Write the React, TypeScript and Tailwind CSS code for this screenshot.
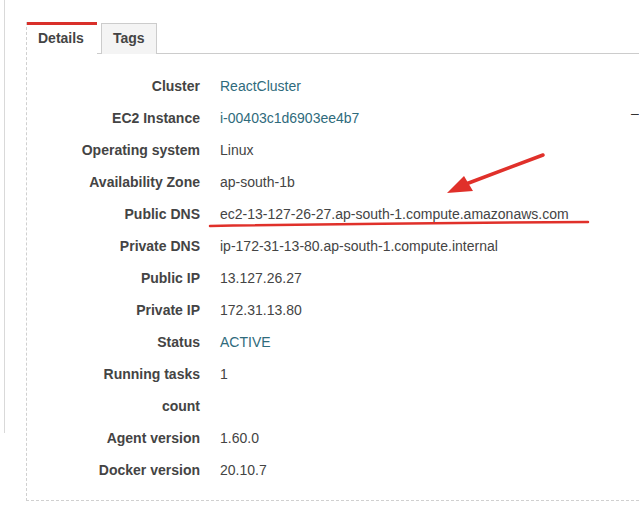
import React from 'react';

type Row = { label: string; value?: string; link?: boolean };

const rows: Row[] = [
  { label: 'Cluster', value: 'ReactCluster', link: true },
  { label: 'EC2 Instance', value: 'i-00403c1d6903ee4b7', link: true },
  { label: 'Operating system', value: 'Linux' },
  { label: 'Availability Zone', value: 'ap-south-1b' },
  { label: 'Public DNS', value: 'ec2-13-127-26-27.ap-south-1.compute.amazonaws.com' },
  { label: 'Private DNS', value: 'ip-172-31-13-80.ap-south-1.compute.internal' },
  { label: 'Public IP', value: '13.127.26.27' },
  { label: 'Private IP', value: '172.31.13.80' },
  { label: 'Status', value: 'ACTIVE', link: true },
  { label: 'Running tasks', value: '1' },
  { label: 'count' },
  { label: 'Agent version', value: '1.60.0' },
  { label: 'Docker version', value: '20.10.7' },
];

export default function App() {
  return (
    <div className="relative w-[639px] h-[515px] overflow-hidden bg-white font-['Liberation_Sans',Arial,sans-serif] text-[14px] text-[#444]">
      <div className="flex">
        {/* outer page rule */}
        <div className="w-[4px] shrink-0" />
        <div className="w-px h-[433px] bg-[#d9d9d9] shrink-0" />
        <div className="w-[21px] shrink-0" />

        {/* details panel */}
        <div className="flex-1 pt-[22px]">
          <div className="border-l border-b border-dashed border-[#d0d0d0] h-[479px]">
            {/* Tabs */}
            <div className="flex h-[32px]">
              <div className="w-[70px] border-t-[3px] border-[#d9302a] pl-[11px] pt-[3px] font-bold">Details</div>
              <div className="w-[4px] border-b border-[#cccccc]" />
              <div className="w-[56px] mt-px border border-b-0 border-[#cccccc] bg-[#f4f4f4] pl-[11px] pt-[4px] font-bold">Tags</div>
              <div className="flex-1 border-b border-[#cccccc]" />
            </div>

            {/* Rows */}
            <div className="pt-[16px]">
              {rows.map((r) => (
                <div key={r.label} className="flex h-[32px] items-center">
                  <div className="w-[173px] text-right font-bold">{r.label}</div>
                  <div className={`pl-[20px] whitespace-nowrap ${r.link ? 'text-[#2f6b7c]' : 'text-[#444]'}`}>{r.value}</div>
                </div>
              ))}
            </div>
          </div>
        </div>
      </div>

      {/* small dash at top right */}
      <div className="absolute left-[631px] top-[106px] text-[#333] leading-none">–</div>

      {/* annotation: arrow and underline */}
      <svg className="absolute left-0 top-0 pointer-events-none" width="639" height="515">
        <line x1="543" y1="155" x2="466" y2="184" stroke="#e0302a" strokeWidth="3.5" strokeLinecap="round" />
        <polygon points="447,193 464,176 473,191" fill="#e0302a" />
        <path d="M210 226 Q 400 223 588 222" stroke="#e0302a" strokeWidth="2.5" fill="none" strokeLinecap="round" />
      </svg>
    </div>
  );
}
